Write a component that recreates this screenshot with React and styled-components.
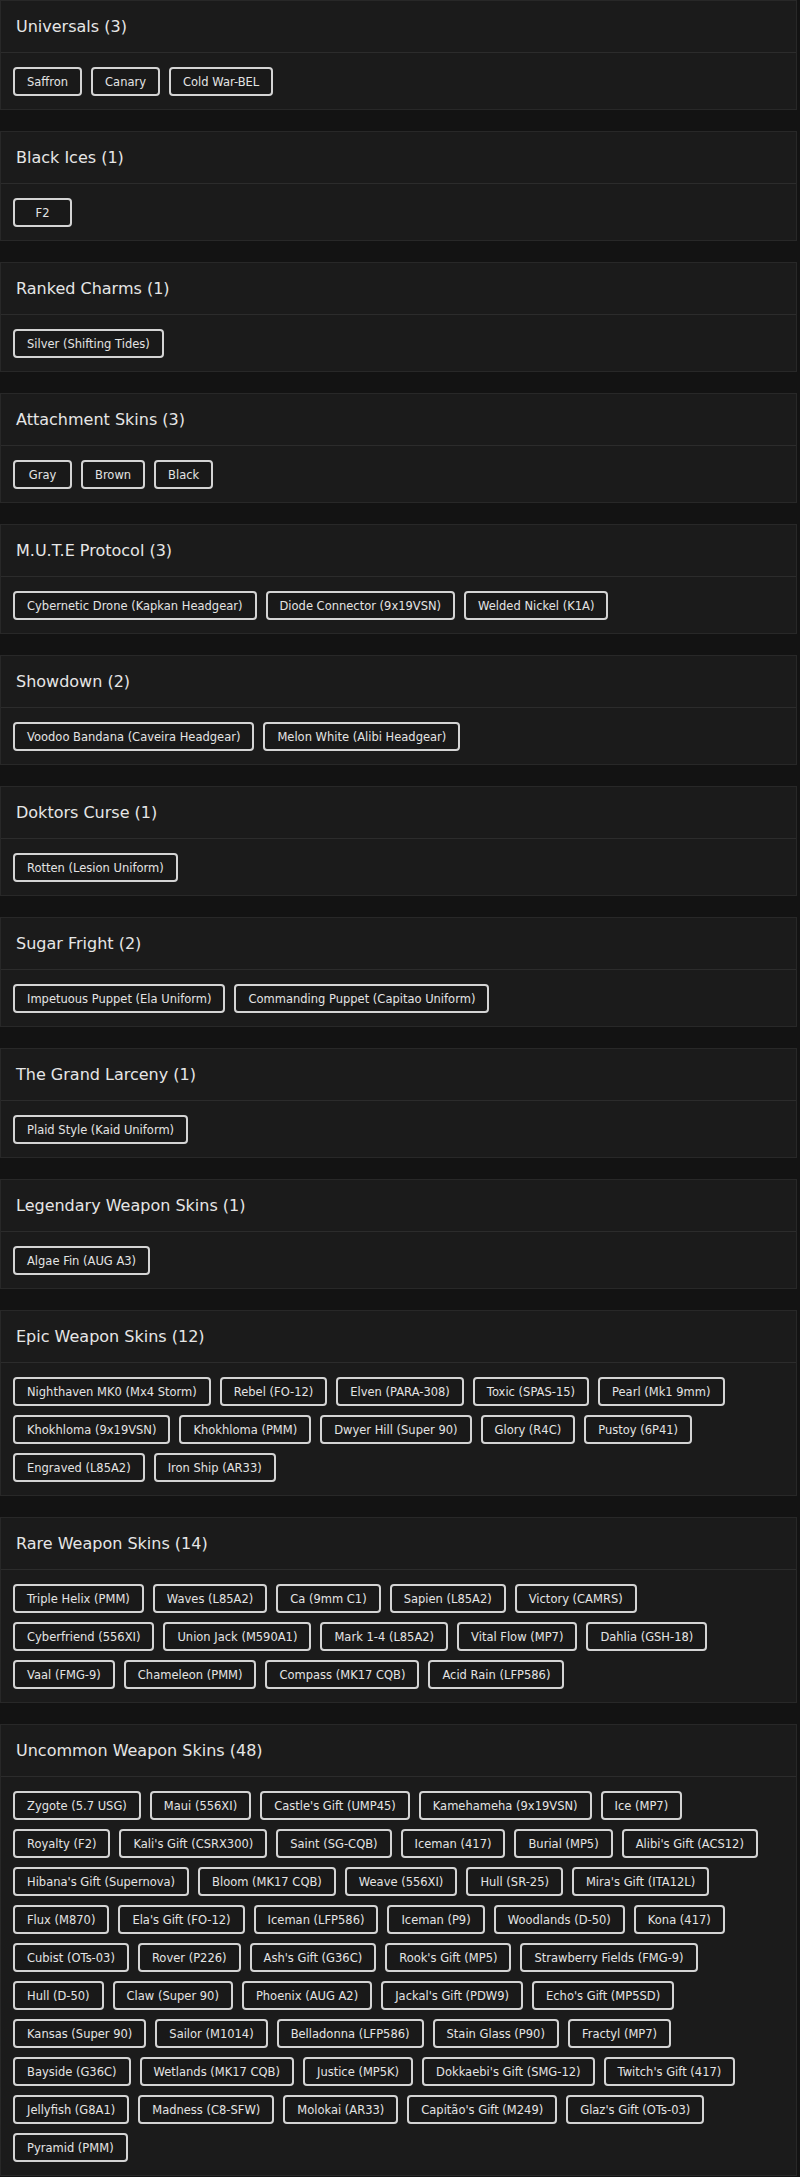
import React from 'react'
import { styled, createGlobalStyle } from 'styled-components'

const sections = [
  { title: 'Universals', items: ['Saffron', 'Canary', 'Cold War-BEL'] },
  { title: 'Black Ices', items: ['F2'] },
  { title: 'Ranked Charms', items: ['Silver (Shifting Tides)'] },
  { title: 'Attachment Skins', items: ['Gray', 'Brown', 'Black'] },
  {
    title: 'M.U.T.E Protocol',
    items: ['Cybernetic Drone (Kapkan Headgear)', 'Diode Connector (9x19VSN)', 'Welded Nickel (K1A)'],
  },
  { title: 'Showdown', items: ['Voodoo Bandana (Caveira Headgear)', 'Melon White (Alibi Headgear)'] },
  { title: 'Doktors Curse', items: ['Rotten (Lesion Uniform)'] },
  { title: 'Sugar Fright', items: ['Impetuous Puppet (Ela Uniform)', 'Commanding Puppet (Capitao Uniform)'] },
  { title: 'The Grand Larceny', items: ['Plaid Style (Kaid Uniform)'] },
  { title: 'Legendary Weapon Skins', items: ['Algae Fin (AUG A3)'] },
  {
    title: 'Epic Weapon Skins',
    items: [
      'Nighthaven MK0 (Mx4 Storm)', 'Rebel (FO-12)', 'Elven (PARA-308)', 'Toxic (SPAS-15)', 'Pearl (Mk1 9mm)',
      'Khokhloma (9x19VSN)', 'Khokhloma (PMM)', 'Dwyer Hill (Super 90)', 'Glory (R4C)', 'Pustoy (6P41)',
      'Engraved (L85A2)', 'Iron Ship (AR33)',
    ],
  },
  {
    title: 'Rare Weapon Skins',
    items: [
      'Triple Helix (PMM)', 'Waves (L85A2)', 'Ca (9mm C1)', 'Sapien (L85A2)', 'Victory (CAMRS)',
      'Cyberfriend (556XI)', 'Union Jack (M590A1)', 'Mark 1-4 (L85A2)', 'Vital Flow (MP7)', 'Dahlia (GSH-18)',
      'Vaal (FMG-9)', 'Chameleon (PMM)', 'Compass (MK17 CQB)', 'Acid Rain (LFP586)',
    ],
  },
  {
    title: 'Uncommon Weapon Skins',
    items: [
      'Zygote (5.7 USG)', 'Maui (556XI)', "Castle's Gift (UMP45)", 'Kamehameha (9x19VSN)', 'Ice (MP7)',
      'Royalty (F2)', "Kali's Gift (CSRX300)", 'Saint (SG-CQB)', 'Iceman (417)', 'Burial (MP5)', "Alibi's Gift (ACS12)",
      "Hibana's Gift (Supernova)", 'Bloom (MK17 CQB)', 'Weave (556XI)', 'Hull (SR-25)', "Mira's Gift (ITA12L)",
      'Flux (M870)', "Ela's Gift (FO-12)", 'Iceman (LFP586)', 'Iceman (P9)', 'Woodlands (D-50)', 'Kona (417)',
      'Cubist (OTs-03)', 'Rover (P226)', "Ash's Gift (G36C)", "Rook's Gift (MP5)", 'Strawberry Fields (FMG-9)',
      'Hull (D-50)', 'Claw (Super 90)', 'Phoenix (AUG A2)', "Jackal's Gift (PDW9)", "Echo's Gift (MP5SD)",
      'Kansas (Super 90)', 'Sailor (M1014)', 'Belladonna (LFP586)', 'Stain Glass (P90)', 'Fractyl (MP7)',
      'Bayside (G36C)', 'Wetlands (MK17 CQB)', 'Justice (MP5K)', "Dokkaebi's Gift (SMG-12)", "Twitch's Gift (417)",
      'Jellyfish (G8A1)', 'Madness (C8-SFW)', 'Molokai (AR33)', "Capitão's Gift (M249)", "Glaz's Gift (OTs-03)",
      'Pyramid (PMM)',
    ],
  },
]

export default function App() {
  return (
    <>
      <GlobalStyle />
      <Page>
        {sections.map((s) => (
          <Card key={s.title}>
            <Header>
              {s.title} ({s.items.length})
            </Header>
            <Body>
              {s.items.map((item) => (
                <Chip key={item}>{item}</Chip>
              ))}
            </Body>
          </Card>
        ))}
      </Page>
    </>
  )
}

const GlobalStyle = createGlobalStyle`
  body {
    margin: 0;
    background-color: #131313;
    font-family: "DejaVu Sans", "Liberation Sans", sans-serif;
  }
`

const Page = styled.div`
  display: flex;
  flex-direction: column;
  gap: 21px;
  padding-right: 3px;
`

const Card = styled.section`
  background-color: #1b1b1b;
  border: 1px solid #282828;
`

const Header = styled.h2`
  margin: 0;
  height: 51px;
  padding: 0 15px;
  display: flex;
  align-items: center;
  font-size: 16px;
  font-weight: 400;
  color: #e6e6e6;
  border-bottom: 1px solid #2c2c2c;
`

const Body = styled.div`
  display: flex;
  flex-wrap: wrap;
  gap: 9px;
  padding: 14px 12px 13px;
`

const Chip = styled.span`
  display: inline-flex;
  align-items: center;
  justify-content: center;
  min-width: 59px;
  height: 29px;
  box-sizing: border-box;
  padding: 0 12px;
  border: 2px solid #d4d4d4;
  border-radius: 4px;
  background-color: #191919;
  color: #e4e4e4;
  font-size: 11.5px;
  white-space: nowrap;
`
